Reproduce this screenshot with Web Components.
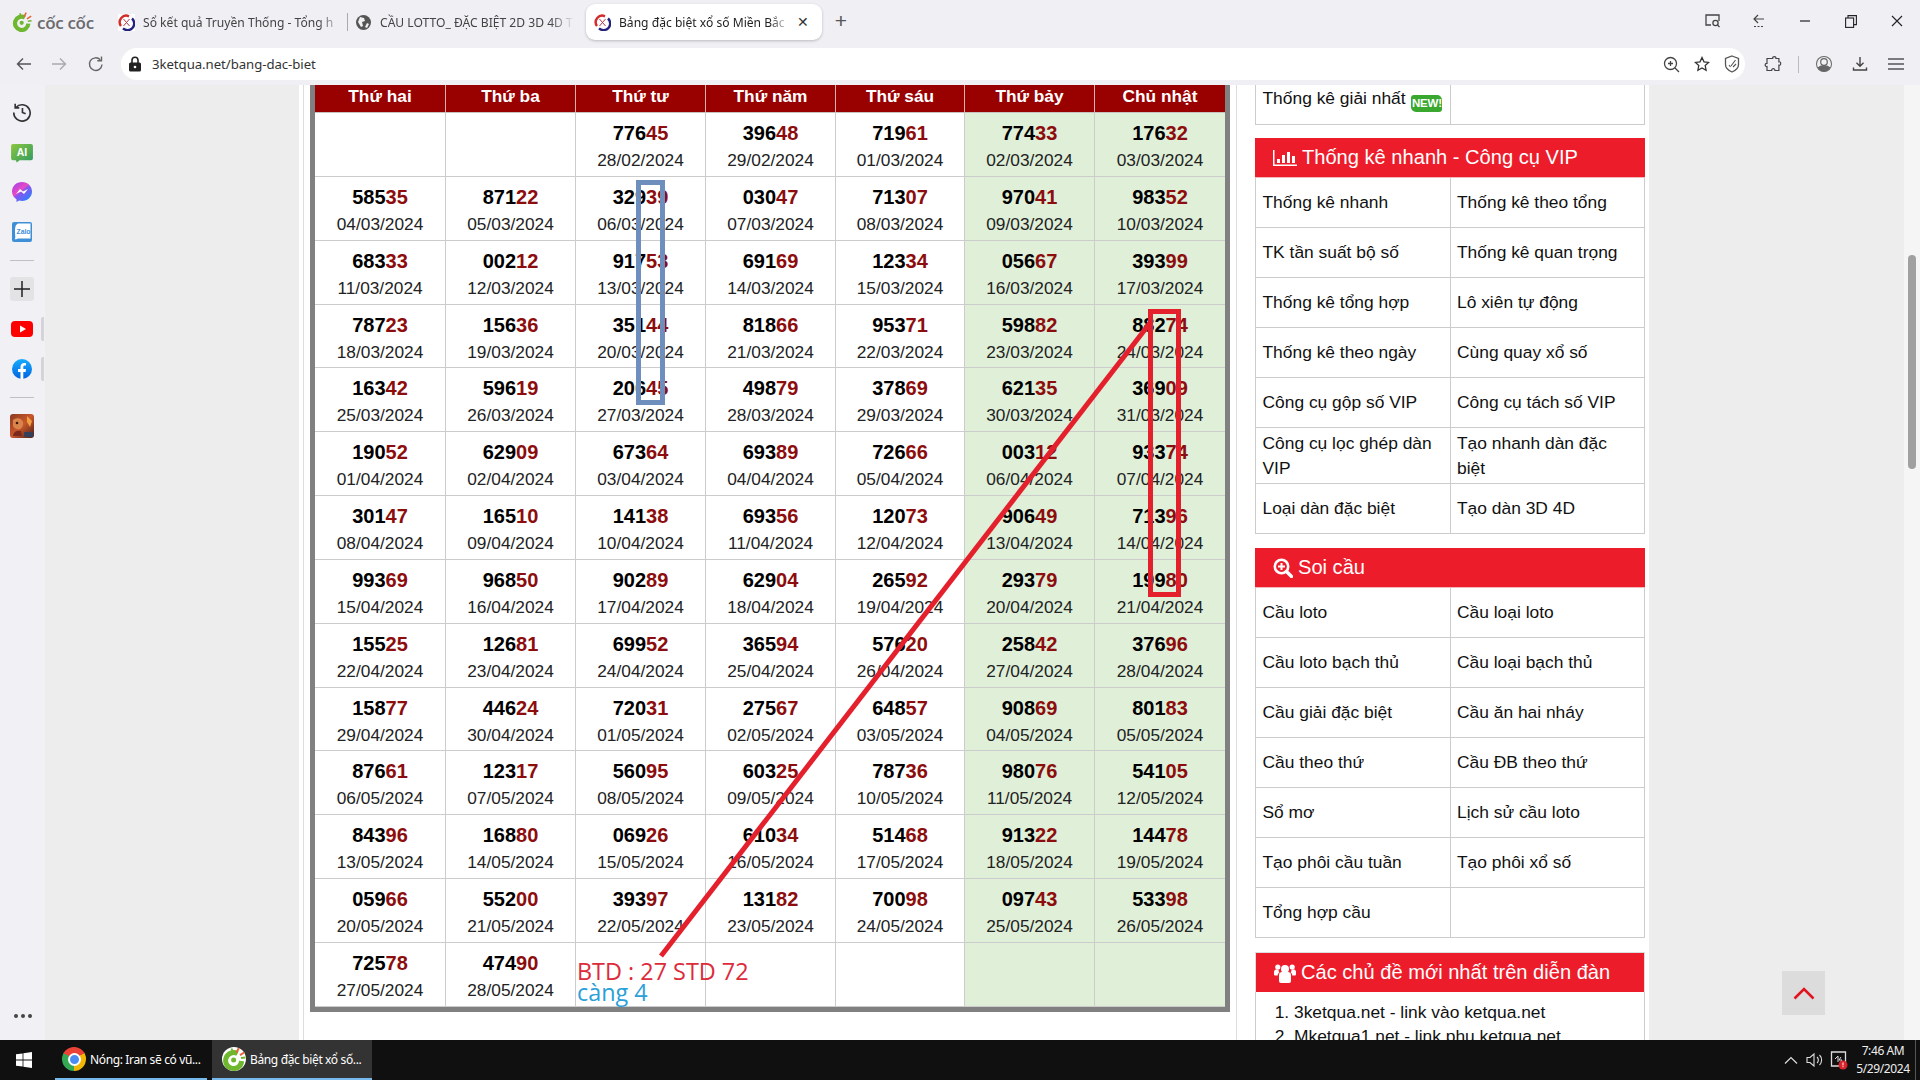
<!DOCTYPE html>
<html lang="vi"><head><meta charset="utf-8"><title>Bảng đặc biệt xổ số Miền Bắc</title>
<style>
html,body{margin:0;padding:0;width:1920px;height:1080px;overflow:hidden;background:#efeff4;font-family:"Liberation Sans",Arial,sans-serif}
.shell{display:flex;flex-direction:column;width:1920px;height:1080px;position:relative}
</style></head><body>
<div class="shell">
<browser-tabs></browser-tabs>
<browser-toolbar></browser-toolbar>
<browser-body>
  <side-rail slot="rail"></side-rail>
  <site-page slot="page">
    <result-table slot="main"></result-table>
    <link-section slot="side" rows="39">
      <link-cell>Thống kê giải nhất <new-badge></new-badge></link-cell><link-cell></link-cell>
    </link-section>
    <link-section slot="side" heading="Thống kê nhanh - Công cụ VIP" icon="chart" gap="13" rows="50,50,50,50,50,56,49">
      <link-cell>Thống kê nhanh</link-cell><link-cell>Thống kê theo tổng</link-cell>
      <link-cell>TK tần suất bộ số</link-cell><link-cell>Thống kê quan trọng</link-cell>
      <link-cell>Thống kê tổng hợp</link-cell><link-cell>Lô xiên tự động</link-cell>
      <link-cell>Thống kê theo ngày</link-cell><link-cell>Cùng quay xổ số</link-cell>
      <link-cell>Công cụ gộp số VIP</link-cell><link-cell>Công cụ tách số VIP</link-cell>
      <link-cell>Công cụ lọc ghép dàn VIP</link-cell><link-cell>Tạo nhanh dàn đặc biệt</link-cell>
      <link-cell>Loại dàn đặc biệt</link-cell><link-cell>Tạo dàn 3D 4D</link-cell>
    </link-section>
    <link-section slot="side" heading="Soi cầu" icon="zoom" gap="14" rows="50,50,50,50,50,50,49">
      <link-cell>Cầu loto</link-cell><link-cell>Cầu loại loto</link-cell>
      <link-cell>Cầu loto bạch thủ</link-cell><link-cell>Cầu loại bạch thủ</link-cell>
      <link-cell>Cầu giải đặc biệt</link-cell><link-cell>Cầu ăn hai nháy</link-cell>
      <link-cell>Cầu theo thứ</link-cell><link-cell>Cầu ĐB theo thứ</link-cell>
      <link-cell>Sổ mơ</link-cell><link-cell>Lịch sử cầu loto</link-cell>
      <link-cell>Tạo phôi cầu tuần</link-cell><link-cell>Tạo phôi xổ số</link-cell>
      <link-cell>Tổng hợp cầu</link-cell><link-cell></link-cell>
    </link-section>
    <forum-section slot="side"></forum-section>
  </site-page>
  <scroll-top slot="top"></scroll-top>
  <fake-scrollbar slot="bar"></fake-scrollbar>
</browser-body>
<win-taskbar></win-taskbar>
<note-overlay></note-overlay>
</div>
<script>
function def(name, css, html, init){
  customElements.define(name, class extends HTMLElement{
    constructor(){super();const r=this.attachShadow({mode:'open'});r.innerHTML='<style>'+css+'</style>'+(typeof html==='function'?'':html);}
    connectedCallback(){ if(typeof html==='function'&&!this._d){this._d=1;this.shadowRoot.innerHTML+=html(this);} if(init)init(this);}
  });
}
const FAV=`<svg width="17" height="17" viewBox="0 0 17 17"><rect width="17" height="17" fill="#fff"/><path d="M3 12A6.5 6.5 0 0 1 11 2.3" fill="none" stroke="#d42a2a" stroke-width="2.4"/><path d="M14 4.5A6.5 6.5 0 0 1 5 14.4" fill="none" stroke="#23237e" stroke-width="2.4"/><path d="M5.5 5l6 7M11.5 5l-6 7" stroke="#b03a4a" stroke-width="1"/></svg>`;
const COC=(s)=>`<svg width="${s}" height="${s}" viewBox="0 0 24 24"><path d="M15.5 6.6A8 8 0 1 0 19.6 14" fill="none" stroke="#6fb72f" stroke-width="5"/><circle cx="11.6" cy="13" r="2.5" fill="#6fb72f"/><path d="M9.5 1.5l1.5 4" stroke="#6fb72f" stroke-width="2"/><path d="M17 .8l-2.6 5" stroke="#e8643c" stroke-width="2"/><path d="M23 5l-5 3.2" stroke="#e8643c" stroke-width="2"/><path d="M23.5 10.5l-4.5.6" stroke="#6fb72f" stroke-width="2"/></svg>`;

def('browser-tabs',`
:host{display:flex;height:48px;background:#efeff4;position:relative;font-family:"Noto Sans","Open Sans",sans-serif;font-size:12.1px;color:#444;flex:none}
.logo{width:110px;display:flex;align-items:center;padding:4px 0 8px 12px;box-sizing:border-box;gap:5px}
.logo b{font:600 17px "Open Sans",sans-serif;color:#6a6a6e;letter-spacing:-.3px;white-space:nowrap}
.tab{height:36px;margin-top:4px;display:flex;align-items:center;box-sizing:border-box;position:relative}
.t1{width:237px;padding-left:8px}.t2{width:231px;padding-left:7px;border-left:1px solid #aaa;height:18px;margin-top:13px}
.lab{margin-left:8px;white-space:nowrap;flex:1;min-width:0;-webkit-mask-image:linear-gradient(90deg,#000 86%,transparent 98%)}
.active{width:236px;margin-left:8px;background:#fff;border-radius:9px;padding:0 8px;box-shadow:0 1px 3px rgba(0,0,0,.22)}
.active .lab{-webkit-mask-image:linear-gradient(90deg,#000 88%,transparent 100%)}
.x{width:22px;text-align:center;font:14px "Liberation Sans";color:#333;flex:none;margin-left:2px}
.plus{font:300 21px "Liberation Sans";color:#555;margin:4px 0 0 9px;height:36px;line-height:34px;width:20px;text-align:center}
.win{margin-left:auto;display:flex}.win span{width:46px;height:42px;display:flex;align-items:center;justify-content:center}
`,`<div class="logo">${COC(20)}<b>cốc cốc</b></div>
<div class="tab t1">${FAV}<span class="lab">Sổ kết quả Truyền Thống - Tổng h</span></div>
<div class="tab t2"><svg width="17" height="17" viewBox="0 0 17 17"><circle cx="8.5" cy="8.5" r="7.5" fill="#555"/><path d="M5 3l4 1 1 3-3 1 1 4-2 1-3-5zM12 9l2 1-2 4-2-1z" fill="#efeff4"/></svg><span class="lab">CẦU LOTTO_ ĐẶC BIỆT 2D 3D 4D T</span></div>
<div class="tab active">${FAV}<span class="lab" style="color:#222">Bảng đặc biệt xổ số Miền Bắc</span><span class="x">✕</span></div>
<div class="plus">+</div>
<div class="win">
<span><svg width="16" height="14" viewBox="0 0 16 14" fill="none" stroke="#444" stroke-width="1.3"><path d="M6 11H1V1h13v6"/><circle cx="10.5" cy="9" r="2.6"/><path d="M12.5 11l2 2"/></svg></span>
<span><svg width="16" height="16" viewBox="0 0 16 16" fill="none" stroke="#444" stroke-width="1.2"><path d="M7 2L3 6l4 4M3 6h10"/><path d="M3 13.5h10" stroke-dasharray="2 1.5"/></svg></span>
<span><svg width="10" height="2" viewBox="0 0 10 2"><path d="M0 1h10" stroke="#222" stroke-width="1.2"/></svg></span>
<span><svg width="12" height="13" viewBox="0 0 12 13" fill="none" stroke="#222" stroke-width="1.1"><rect x=".6" y="3" width="8" height="9.4"/><path d="M3 3V.6h8.4v9H9"/></svg></span>
<span><svg width="12" height="12" viewBox="0 0 12 12"><path d="M1 1l10 10M11 1L1 11" stroke="#222" stroke-width="1.1"/></svg></span>
</div>`);

def('browser-toolbar',`
:host{display:flex;height:37px;background:#efeff4;align-items:flex-start;flex:none;box-sizing:border-box;color:#444}
.nav{width:121px;height:32px;display:flex;align-items:center;padding-left:14px;box-sizing:border-box}
.nav svg{flex:none}
.bar{width:1624px;height:32px;background:#fff;border-radius:16px;display:flex;align-items:center;padding:0 1px 0 7px;box-sizing:border-box}
.url{font:13.2px "Noto Sans","Open Sans",sans-serif;color:#333;margin-left:10px;flex:1;letter-spacing:-.05px}
.ic{width:24px;height:32px;display:flex;align-items:center;justify-content:center;flex:none}
.gap{margin-left:6.5px}
.r{display:flex;height:32px;align-items:center}
.sep{width:1px;height:17px;background:#bbb;margin:0 13px}
`,`<div class="nav">
<svg width="20" height="20" viewBox="0 0 20 20" fill="none" stroke="#555" stroke-width="1.4"><path d="M17 10H4M9 4.5L3.5 10 9 15.5"/></svg>
<svg style="margin-left:15px" width="20" height="20" viewBox="0 0 20 20" fill="none" stroke="#aaa" stroke-width="1.4"><path d="M3 10h13M11 4.5l5.500 5.500L11 15.500"/></svg>
<svg style="margin-left:18px" width="18" height="18" viewBox="0 0 18 18" fill="none" stroke="#666" stroke-width="1.4"><path d="M15 9.500A6.300 6.300 0 1 1 13.300 4.800"/><path d="M14.500 1.500v4.200h-4.200"/></svg>
</div>
<div class="bar">
<svg width="14" height="16" viewBox="0 0 14 16"><rect x="1" y="6.500" width="12" height="9" rx="1.500" fill="#222"/><path d="M4 7V4.300a3 3 0 0 1 6 0V7" fill="none" stroke="#222" stroke-width="1.600"/><circle cx="7" cy="11" r="1.300" fill="#fff"/></svg>
<span class="url">3ketqua.net/bang-dac-biet</span>
<span class="ic"><svg width="17" height="17" viewBox="0 0 17 17" fill="none" stroke="#444" stroke-width="1.300"><circle cx="7.500" cy="7.500" r="6"/><path d="M12 12l4 4M7.500 5v5M5 7.500h5"/></svg></span>
<span class="ic gap"><svg width="16" height="16" viewBox="0 0 16 16" fill="none" stroke="#333" stroke-width="1.300"><path d="M8 1.500l2 4.300 4.600.6-3.400 3.100.9 4.700L8 11.900l-4.100 2.300.9-4.700L1.400 6.400 6 5.800z"/></svg></span>
<span class="ic gap"><svg width="16" height="18" viewBox="0 0 16 18" fill="none" stroke="#555" stroke-width="1.300"><path d="M8 1l6.500 2.500v6c0 3.500-3 6-6.500 7.500-3.500-1.500-6.500-4-6.500-7.500v-6z"/><path d="M5 10l1.500 2M7 11l4.500-6M9 12l3-3" stroke-width="1.100"/></svg></span>
</div>
<div class="r">
<span class="ic" style="margin-left:16px"><svg width="18" height="18" viewBox="0 0 18 18" fill="none" stroke="#444" stroke-width="1.200"><path d="M6.500 3.500h2.200c-.4-2.600 3.600-2.600 3.200 0h3v3.300c2.400-.4 2.400 3.800 0 3.400v5.300h-4c.3-2.400-3.500-2.400-3.200 0H3v-4c-2.400.4-2.400-3.400 0-3.200V3.500z"/></svg></span>
<span class="sep"></span>
<span class="ic"><svg width="18" height="18" viewBox="0 0 18 18"><circle cx="9" cy="9" r="8" fill="#666"/><circle cx="9" cy="9" r="7" fill="#efeff4"/><circle cx="9" cy="7" r="3.300" fill="none" stroke="#666" stroke-width="1.200"/><path d="M2.500 12.500a8 6 0 0 1 13 0A7.500 7.500 0 0 1 9 16.500a7.500 7.500 0 0 1-6.500-4z" fill="#666"/></svg></span>
<span class="ic" style="margin-left:12px"><svg width="16" height="16" viewBox="0 0 16 16" fill="none" stroke="#444" stroke-width="1.400"><path d="M8 1v9M4.500 6.800L8 10.300l3.500-3.500M1.500 11.500v2.500h13v-2.500"/></svg></span>
<span class="ic" style="margin-left:12px"><svg width="16" height="12" viewBox="0 0 16 12" stroke="#555" stroke-width="1.400"><path d="M0 1h16M0 6h16M0 11h16"/></svg></span>
</div>`);

def('browser-body',`
:host{display:flex;height:955px;flex:none;position:relative;overflow:hidden;background:#ededed}
::slotted([slot=rail]){flex:none}
`,`<slot name="rail"></slot><slot name="page"></slot><slot name="top"></slot><slot name="bar"></slot>`);

def('side-rail',`
:host{display:flex;flex-direction:column;align-items:flex-start;width:45px;height:955px;background:#f0f0f5;padding-top:7px;box-sizing:border-box;position:relative}
.i{height:40px;width:44px;display:flex;align-items:center;justify-content:center;position:relative;flex:none}
hr{width:24px;height:1px;border:0;background:#bfbfc4;margin:8px 0 8px 10px;flex:none}
.pill::after{content:"";position:absolute;left:41px;top:8px;width:3px;height:24px;background:#d4d4d8;border-radius:2px 0 0 2px}
.box{width:24px;height:24px;background:#e3e3e6;border-radius:3px;display:flex;align-items:center;justify-content:center}
.dots{margin:auto 0 22px 14px;display:flex;gap:3px}.dots i{width:4px;height:4px;border-radius:50%;background:#444}
text{font-family:"Liberation Sans",sans-serif}
`,`<div class="i"><svg width="20" height="20" viewBox="0 0 22 22" fill="none" stroke="#333" stroke-width="1.800"><path d="M4.300 6A9 9 0 1 1 2 11.500"/><path d="M3.500 2v4.500H8"/><path d="M11.500 6.500v5l3.500 1.500"/></svg></div>
<div class="i"><svg style="margin-top:3px" width="22" height="19" viewBox="0 0 23 20"><defs><linearGradient id="ai" x1="0" y1="0" x2="1" y2="1"><stop offset="0" stop-color="#8cc63f"/><stop offset="1" stop-color="#2f9a62"/></linearGradient></defs><path d="M2 0h19a2 2 0 0 1 2 2v13a2 2 0 0 1-2 2H9l-3 2.500-1-2.500H2a2 2 0 0 1-2-2V2a2 2 0 0 1 2-2z" fill="url(#ai)"/><text x="11.500" y="12.500" fill="#fff" font-size="11" font-weight="700" text-anchor="middle">AI</text></svg></div>
<div class="i"><svg width="20" height="20" viewBox="0 0 20 20"><defs><linearGradient id="ms" x1="0" y1="0" x2=".8" y2="1"><stop offset="0" stop-color="#9a3df0"/><stop offset=".45" stop-color="#e84bc4"/><stop offset=".55" stop-color="#8a55f0"/><stop offset="1" stop-color="#1f84ff"/></linearGradient></defs><path d="M10 0c5.700 0 10 4.200 10 9.500S15.700 19 10 19c-1 0-2-.100-2.900-.400L4.500 20v-2.800C1.700 15.500 0 12.700 0 9.500 0 4.200 4.300 0 10 0z" fill="url(#ms)"/><path d="M4 12l4-5 3 2.500L16 7l-4 5-3-2.500z" fill="#fff"/></svg></div>
<div class="i"><svg width="20" height="20" viewBox="0 0 20 20"><rect width="20" height="20" rx="2" fill="#3f8fd8"/><path d="M6 1.500h12.500v15H6c-2 .8-3 1-3.500.8C4 16 3 14 3 9c0-5 1-6.500 3-7.500z" fill="#fff"/><text x="11.500" y="11.500" font-size="6.800" font-weight="700" fill="#3f8fd8" text-anchor="middle">Zalo</text></svg></div>
<hr>
<div class="i"><div class="box"><svg width="16" height="16" viewBox="0 0 16 16"><path d="M8 0v16M0 8h16" stroke="#222" stroke-width="1.500"/></svg></div></div>
<div class="i pill"><svg width="22" height="16" viewBox="0 0 22 16"><rect width="22" height="16" rx="4" fill="#f00"/><path d="M9 4.500l6 3.500-6 3.500z" fill="#fff"/></svg></div>
<div class="i pill"><svg width="20" height="20" viewBox="0 0 20 20"><defs><linearGradient id="fb" x1="0" y1="0" x2="0" y2="1"><stop offset="0" stop-color="#18acfe"/><stop offset="1" stop-color="#0163e0"/></linearGradient></defs><circle cx="10" cy="10" r="10" fill="url(#fb)"/><path d="M8.500 20v-7H6v-3h2.500V7.800c0-2.500 1.500-3.800 3.700-3.800.9 0 1.800.2 1.800.2v2.400h-1.200c-1.200 0-1.500.7-1.500 1.500V10H14l-.4 3h-2.300v7z" fill="#fff"/></svg></div>
<hr>
<div class="i"><svg width="24" height="24" viewBox="0 0 24 24"><defs><linearGradient id="g" x1="0" y1="0" x2="1" y2="1"><stop offset="0" stop-color="#8a3a22"/><stop offset=".5" stop-color="#c9572a"/><stop offset="1" stop-color="#4a1d18"/></linearGradient></defs><rect width="24" height="24" rx="3" fill="url(#g)"/><path d="M17 2l5 5-2 6-3-5z" fill="#f0a040"/><path d="M3 6c4-3 9-2 10 2 .6 3-1 6-3 7-3 1-6-1-7-3z" fill="#d9844a"/><circle cx="7" cy="9" r="1.300" fill="#3a1510"/><path d="M3 22c0-4 4-6 8-5l1 5z" fill="#7a2a1c"/><rect x="14" y="18" width="9" height="5" rx="1" fill="#34405a"/></svg></div>
<div class="dots"><i></i><i></i><i></i></div>`);

def('site-page',`
:host{display:flex;width:1350px;height:955px;margin-left:254px;background:#fff;flex:none;overflow:hidden;box-sizing:border-box;padding-left:4px}
.main{width:934px;height:955px;box-sizing:border-box;border-left:1px solid #ddd;border-right:1px solid #ddd;padding:0 6px;flex:none}
.side{width:390px;margin-left:18px;flex:none}
`,`<div class="main"><slot name="main"></slot></div><div class="side"><slot name="side"></slot></div>`);

const HEAD=['Thứ hai','Thứ ba','Thứ tư','Thứ năm','Thứ sáu','Thứ bảy','Chủ nhật'];
const NUMS=`,,77645,39648,71961,77433,17632,58535,87122,32939,03047,71307,97041,98352,68333,00212,91753,69169,12334,05667,39399,78723,15636,35144,81866,95371,59882,88274,16342,59619,20645,49879,37869,62135,36909,19052,62909,67364,69389,72666,00312,93374,30147,16510,14138,69356,12073,90649,71396,99369,96850,90289,62904,26592,29379,19980,15525,12681,69952,36594,57620,25842,37696,15877,44624,72031,27567,64857,90869,80183,87661,12317,56095,60325,78736,98076,54105,84396,16880,06926,61034,51468,91322,14478,05966,55200,39397,13182,70098,09743,53398,72578,47490,,,,,`.split(',');

def('day-cell',`
:host{display:block;box-sizing:border-box;border-right:1px solid #ccc;border-bottom:1px solid #ccc;background:#fff;text-align:center;padding-top:8px;overflow:hidden}
:host([weekend]){background:#dfefd8}
:host(:nth-child(7n)){border-right:0}
.n{font:700 20px/24px "Liberation Sans",Arial,sans-serif;color:#000;display:block}
.n i{font-style:normal;color:#8c0d0d}
.d{font:17.3px/30px "Liberation Sans",Arial,sans-serif;color:#222;display:block}
`,(h)=>{const n=h.getAttribute('num')||'',d=h.getAttribute('date')||'';return n?`<span class="n">${n.slice(0,3)}<i>${n.slice(3)}</i></span><span class="d">${d}</span>`:''});

const COLS='131px 130px 130px 130px 129px 130px 130px';
def('result-table',`
:host{display:block;width:920px;box-sizing:border-box;border:5px solid #808080;border-top:0;background:#fff}
.h{display:grid;grid-template-columns:${COLS};height:28px;background:#990000;border-bottom:1px solid #c9c0c0;box-sizing:border-box}
.h span{font:700 17.3px/22px "Liberation Sans",Arial,sans-serif;color:#fff;text-align:center;border-right:1px solid #d8b0b0}
.h span:last-child{border-right:0}
.g{display:grid;grid-template-columns:${COLS};grid-auto-rows:63.857px}
`,()=>{
  const start=new Date(Date.UTC(2024,1,26));let c='';
  NUMS.forEach((n,i)=>{const t=new Date(start.getTime()+i*864e5);const p=x=>String(x).padStart(2,'0');
    c+=`<day-cell ${i%7>4?'weekend':''} num="${n}" date="${p(t.getUTCDate())}/${p(t.getUTCMonth()+1)}/${t.getUTCFullYear()}"></day-cell>`;});
  return `<div class="h">${HEAD.map(x=>`<span>${x}</span>`).join('')}</div><div class="g">${c}</div>`;
});

const ICONS={
chart:`<svg width="24" height="16" viewBox="0 0 24 16" fill="#fff"><path d="M0 0h1.500v14.500H24V16H0z"/><rect x="4" y="9" width="3" height="4"/><rect x="9" y="5" width="3" height="8"/><rect x="14" y="2" width="3" height="11"/><rect x="19" y="6" width="3" height="7"/></svg>`,
zoom:`<svg width="20" height="20" viewBox="0 0 20 20" fill="none" stroke="#fff"><circle cx="8.500" cy="8.500" r="6.700" stroke-width="2.600"/><path d="M13.500 13.500l5 5" stroke-width="3.400" stroke-linecap="round"/><path d="M8.500 5v7M5 8.500h7" stroke-width="2"/></svg>`,
users:`<svg width="22" height="20" viewBox="0 0 22 20" fill="#fff"><circle cx="11" cy="6" r="4"/><circle cx="3.800" cy="4" r="2.600"/><circle cx="18.200" cy="4" r="2.600"/><path d="M5 12c0-2 1.500-3 3-3h6c1.500 0 3 1 3 3v6a2 2 0 0 1-2 2H7a2 2 0 0 1-2-2z"/><path d="M0 9c0-1.500 1-2.500 2-2.500h2.500c0 1.500.5 2.500 1 3-1.200.6-1.800 1.500-1.800 3H1.500C.5 12.500 0 12 0 11zM22 9c0-1.500-1-2.500-2-2.500h-2.500c0 1.500-.5 2.500-1 3 1.200.6 1.800 1.500 1.800 3h2.200c1 0 1.500-.5 1.500-1.500z"/></svg>`};

def('section-head',`
:host{display:flex;align-items:center;height:40px;background:#ed1c2b;background-clip:padding-box;color:#fff;font:20.1px "Liberation Sans",Arial,sans-serif;padding-left:18px;box-sizing:border-box;gap:5px;white-space:nowrap;border-bottom:1px solid #f2b9bd}
svg{flex:none}
`,(h)=>`${ICONS[h.getAttribute('icon')]||''}<slot></slot>`);

def('link-section',`
:host{display:block;font:17.4px/24.5px "Liberation Sans",Arial,sans-serif;color:#111}
.g{display:grid;grid-template-columns:195px 195px;border-bottom:1px solid #ccc}
`,(h)=>{
  const rows=h.getAttribute('rows').split(',').map(x=>x+'px').join(' ');
  h.style.marginTop=(h.getAttribute('gap')||0)+'px';
  const head=h.getAttribute('heading');
  return (head?`<section-head icon="${h.getAttribute('icon')}">${head}</section-head>`:'')+`<div class="g" style="grid-template-rows:${rows}"><slot></slot></div>`;
},(h)=>{
  if(!h.getAttribute('heading'))[...h.children].forEach(c=>c.setAttribute('top',''));
  [...h.children].forEach((c,i,a)=>{ if(i<a.length-2) c.setAttribute('line','');  if(i%2) c.setAttribute('last','');});
});

def('link-cell',`
:host{display:flex;align-items:center;box-sizing:border-box;padding:0 8px 0 6.5px;border-left:1px solid #ccc;overflow:hidden}
:host([line]){border-bottom:1px solid #ccc}
:host([last]){border-right:1px solid #ccc;padding-left:6px}
:host([top]){align-items:flex-start;padding-top:1px;white-space:nowrap}
`,`<span><slot></slot></span>`);

def('new-badge',`
:host{display:inline-block;vertical-align:-3px;width:31px;height:17px;background:#3aa72e;border-radius:3px 5px 3px 5px;color:#fff;font:700 11.5px/17px "Liberation Sans",sans-serif;text-align:center;letter-spacing:-.2px;margin-left:1px}
`,`NEW!`);

def('forum-section',`
:host{display:block;margin-top:14px;font:17.4px/24px "Liberation Sans",Arial,sans-serif;color:#111}
section-head{border:1px solid #ddd;border-bottom:0;height:40px;padding-left:18px}
ol{margin:0;padding:8px 0 0 38px;border-left:1px solid #ccc;border-right:1px solid #ccc;height:90px;box-sizing:border-box}
`,`<section-head icon="users">Các chủ đề mới nhất trên diễn đàn</section-head><ol><li>3ketqua.net - link vào ketqua.net</li><li>Mketqua1.net - link phụ ketqua.net</li></ol>`);

def('scroll-top',`
:host{position:absolute;left:1782px;top:886px;width:43px;height:44px;background:#dcdcdc;display:flex;align-items:center;justify-content:center}
`,`<svg width="22" height="13" viewBox="0 0 22 13" fill="none"><path d="M1.500 11.500L11 2l9.500 9.500" stroke="#e0141e" stroke-width="2.600"/></svg>`);

def('fake-scrollbar',`
:host{display:block;position:absolute;right:0;top:0;width:16px;height:955px;background:#f5f5f5}
i{position:absolute;left:4px;top:170px;width:8px;height:214px;background:#a0a0a0;border-radius:4px}
`,`<i></i>`);

def('win-taskbar',`
:host{display:flex;height:40px;background:#101010;color:#fff;font:12px "Noto Sans","Open Sans",sans-serif;letter-spacing:-.36px;flex:none;align-items:stretch}
.st{width:48px;display:flex;align-items:center;justify-content:center}
.it{display:flex;align-items:center;box-sizing:border-box;border-bottom:2px solid #76b9ed;white-space:nowrap}
.a{width:152px;margin-left:7px;padding-left:7px;gap:4px}
.b{width:160px;margin-left:5px;padding-left:10px;gap:4px;background:#333}
.chr{width:24px;height:24px;border-radius:50%;background:conic-gradient(from 60deg,#f2b705 0 120deg,#34a853 120deg 240deg,#ea4335 240deg 360deg);display:flex;align-items:center;justify-content:center;flex:none}
.chr i{width:13px;height:13px;border-radius:50%;background:#4a8cf0;border:2px solid #fff;box-sizing:border-box}
.tray{margin-left:auto;display:flex;align-items:center}
.clock{width:64px;text-align:center;font:12px/18px "Noto Sans","Open Sans",sans-serif;letter-spacing:-.4px;margin-left:3px;color:#eee}
.line{width:1px;height:40px;background:#555;margin:0 4px 0 0}
`,`<div class="st"><svg width="16" height="16" viewBox="0 0 16 16" fill="#fff"><path d="M0 2.300l6.600-.9v6.200H0zM7.400 1.300L16 0v7.600H7.400zM0 8.400h6.600v6.200L0 13.700zM7.400 8.400H16V16l-8.600-1.200z"/></svg></div>
<div class="it a"><span class="chr"><i></i></span><span>Nóng: Iran sẽ có vũ...</span></div>
<div class="it b">${COC(24).replace('viewBox','style="background:#fff;border-radius:50%" viewBox')}<span>Bảng đặc biệt xổ số...</span></div>
<div class="tray">
<svg width="14" height="8" viewBox="0 0 14 8" fill="none" stroke="#ddd" stroke-width="1.200"><path d="M1 7.500L7 1.500l6 6"/></svg>
<svg style="margin-left:8px" width="18" height="16" viewBox="0 0 18 16" fill="none" stroke="#ddd" stroke-width="1.100"><path d="M1 5.500h3L8 2v12l-4-3.500H1z"/><path d="M11 5a4 4 0 0 1 0 6M13.500 3a7 7 0 0 1 0 10"/></svg>
<svg style="margin-left:6px" width="18" height="20" viewBox="0 0 18 20"><path d="M1.500 2h14v14h-14z" fill="none" stroke="#ddd" stroke-width="1.300"/><path d="M5 9l3-3v6M11 7l-2 3h3l-2 3" fill="none" stroke="#ddd" stroke-width="1"/><circle cx="13" cy="15" r="4.500" fill="#d8232a"/><rect x="12.500" y="12.500" width="1" height="3" fill="#fff"/><rect x="12.500" y="16.200" width="1" height="1" fill="#fff"/></svg>
<div class="clock">7:46 AM<br>5/29/2024</div><div class="line"></div>
</div>`);

def('note-overlay',`
:host{position:absolute;left:0;top:0;width:1920px;height:1040px;pointer-events:none;overflow:hidden}
svg{position:absolute;left:0;top:0}
.t{position:absolute;left:577px;white-space:nowrap;font:23.4px/21px "Open Sans","Noto Sans",sans-serif}
`,`<svg width="1920" height="1040" fill="none"><rect x="638.500" y="182.500" width="24" height="220" stroke="#6e8fbd" stroke-width="5"/><path d="M1150 323L661 956" stroke="#e4202c" stroke-width="5"/><rect x="1150.500" y="311.500" width="28" height="283" stroke="#e4202c" stroke-width="5"/></svg>
<div class="t" style="top:960.500px;color:#dc2b3a">BTD : 27 STD 72</div>
<div class="t" style="top:982px;color:#2b9fd8">càng 4</div>`);
</script>
</body></html>
